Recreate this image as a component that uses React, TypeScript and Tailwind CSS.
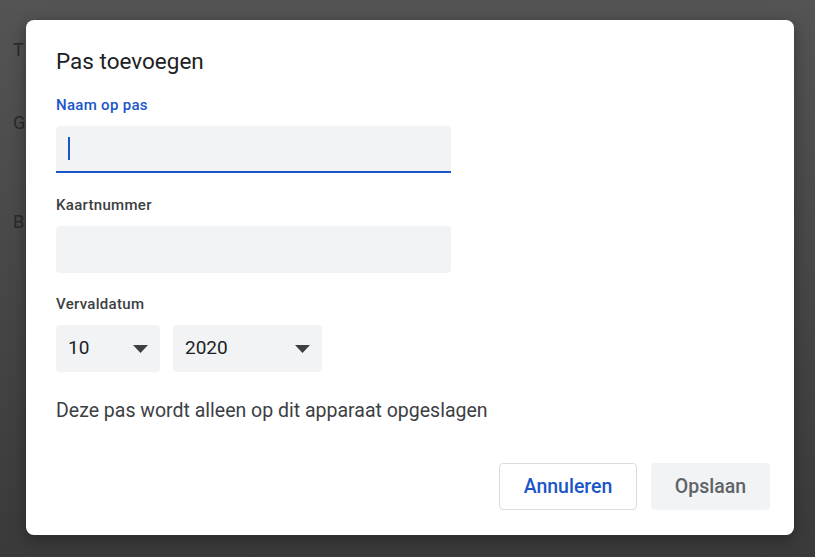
import React from "react";

const font = { fontFamily: "Roboto, 'Liberation Sans', sans-serif" };

function Caret() {
  return (
    <svg width="15" height="8" viewBox="0 0 15 8" className="shrink-0">
      <path d="M0 0h15L7.5 8z" fill="#3c4043" />
    </svg>
  );
}

function Select({ value, width }: { value: string; width: string }) {
  return (
    <div className={`flex h-[47px] ${width} items-center justify-between rounded-[4px] bg-[#f1f3f4] pl-3 pr-3`}>
      <span className="text-[19px] text-[#202124]">{value}</span>
      <Caret />
    </div>
  );
}

export default function App() {
  return (
    <div
      className="relative h-[557px] w-[815px] overflow-hidden bg-gradient-to-b from-[#545454] to-[#3a3a3a]"
      style={font}
    >
      {/* page behind the overlay */}
      <span className="absolute left-[13px] top-[36px] text-[18px] text-[#2a2a2a]">T</span>
      <span className="absolute left-[13px] top-[109px] text-[18px] text-[#2a2a2a]">G</span>
      <span className="absolute left-[13px] top-[208px] text-[18px] text-[#2a2a2a]">B</span>

      <div className="absolute left-[26px] top-[20px] flex h-[515px] w-[768px] flex-col rounded-[8px] bg-white pl-[30px] pr-[24px] pt-[26px] shadow-[0_4px_16px_rgba(0,0,0,0.35)]">
        <h2 className="text-[22.5px] leading-[30px] text-[#202124]">Pas toevoegen</h2>

        <label className="mt-[19px] text-[15px] leading-[20px] font-medium tracking-[0.3px] text-[#1a56c8]">Naam op pas</label>
        <div className="mt-[11px] flex h-[47px] w-[395px] items-center rounded-t-[4px] border-b-2 border-[#1a56c8] bg-[#f1f3f4] px-3">
          <span className="h-[23px] w-[1.5px] bg-[#1a56c8]" />
        </div>

        <label className="mt-[22px] text-[15px] leading-[20px] font-medium tracking-[0.3px] text-[#3c4043]">Kaartnummer</label>
        <div className="mt-[11px] h-[47px] w-[395px] rounded-[4px] bg-[#f1f3f4]" />

        <label className="mt-[21px] text-[15px] leading-[20px] font-medium tracking-[0.3px] text-[#3c4043]">Vervaldatum</label>
        <div className="mt-[11px] flex gap-[13px]">
          <Select value="10" width="w-[104px]" />
          <Select value="2020" width="w-[149px]" />
        </div>

        <p className="mt-[26px] text-[19.5px] leading-[26px] text-[#3c4043]">Deze pas wordt alleen op dit apparaat opgeslagen</p>

        <div className="mt-auto mb-[25px] flex justify-end gap-[14px]">
          <button className="h-[47px] w-[138px] rounded-[4px] border border-[#dadce0] bg-white text-[19.5px] font-medium text-[#1a56c8]">
            Annuleren
          </button>
          <button className="h-[47px] w-[119px] rounded-[4px] bg-[#f1f3f4] text-[19.5px] font-medium text-[#5f6368]">
            Opslaan
          </button>
        </div>
      </div>
    </div>
  );
}
